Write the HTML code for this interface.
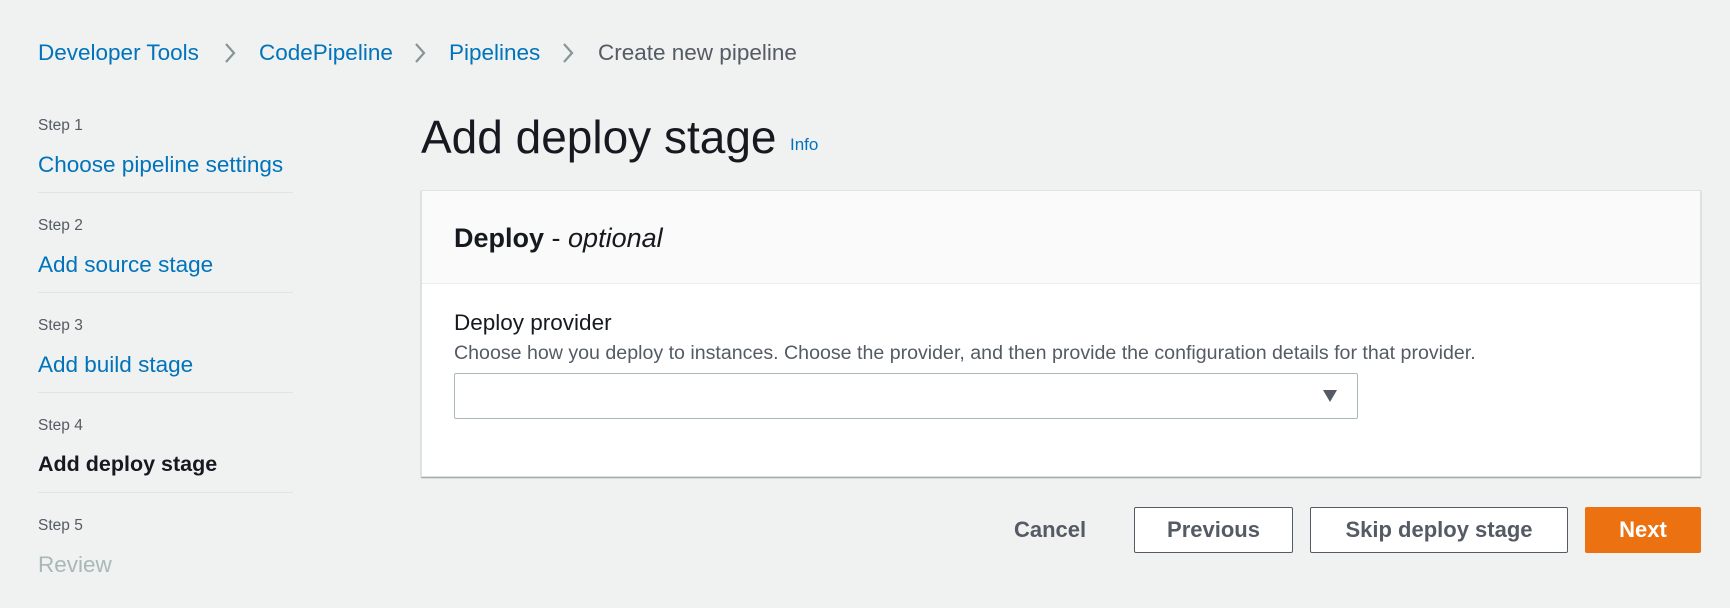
<!DOCTYPE html>
<html><head><meta charset="utf-8"><style>
*{margin:0;padding:0;box-sizing:border-box}
body{width:1730px;height:608px;background:#f0f1f1;font-family:"Liberation Sans",sans-serif;position:relative;overflow:hidden;color:#16191f}
.a{position:absolute;white-space:nowrap;line-height:1}
.bc{top:42px;font-size:22.5px;color:#0073bb}
.chev{top:41px;width:20px;height:24px}
.step{left:38px;font-size:15.5px;color:#545b64}
.lnk{left:38px;font-size:22.5px;color:#0073bb}
.div{left:38px;width:255px;height:1px;background:#e2e4e4}
.btn{top:507px;height:46px;border:1px solid #545b64;border-radius:2px;background:#fff;font-weight:bold;font-size:22px;color:#545b64;display:flex;align-items:center;justify-content:center}
</style></head><body>
<div class="a bc" style="left:38px">Developer Tools</div>
<svg class="a chev" style="left:220px" viewBox="0 0 20 24"><path d="M6 3l8 9-8 9" fill="none" stroke="#879596" stroke-width="2.2"/></svg>
<div class="a bc" style="left:259px">CodePipeline</div>
<svg class="a chev" style="left:410px" viewBox="0 0 20 24"><path d="M6 3l8 9-8 9" fill="none" stroke="#879596" stroke-width="2.2"/></svg>
<div class="a bc" style="left:449px">Pipelines</div>
<svg class="a chev" style="left:558px" viewBox="0 0 20 24"><path d="M6 3l8 9-8 9" fill="none" stroke="#879596" stroke-width="2.2"/></svg>
<div class="a bc" style="left:598px;color:#545b64">Create new pipeline</div>

<div class="a step" style="top:118px">Step 1</div>
<div class="a lnk" style="top:154px">Choose pipeline settings</div>
<div class="a div" style="top:192px"></div>
<div class="a step" style="top:218px">Step 2</div>
<div class="a lnk" style="top:254px">Add source stage</div>
<div class="a div" style="top:292px"></div>
<div class="a step" style="top:318px">Step 3</div>
<div class="a lnk" style="top:354px">Add build stage</div>
<div class="a div" style="top:392px"></div>
<div class="a step" style="top:418px">Step 4</div>
<div class="a lnk" style="top:454px;color:#16191f;font-weight:bold;font-size:21.5px">Add deploy stage</div>
<div class="a div" style="top:492px"></div>
<div class="a step" style="top:518px">Step 5</div>
<div class="a lnk" style="top:554px;color:#aab7b8">Review</div>

<div class="a" style="left:421px;top:114px;font-size:46px">Add deploy stage</div>
<div class="a" style="left:790px;top:136px;font-size:17px;color:#0073bb">Info</div>

<div class="a" style="left:421px;top:190px;width:1280px;height:287px;background:#fff;border:1px solid #e0e2e2;box-shadow:0 1px 1px rgba(0,28,36,.4)">
 <div style="height:93px;background:#fafafa;border-bottom:1px solid #eaeded;padding:34px 0 0 32px;font-size:27px;line-height:1"><b>Deploy</b> - <i>optional</i></div>
 <div class="a" style="left:32px;top:121px;font-size:22.5px">Deploy provider</div>
 <div class="a" style="left:32px;top:153px;font-size:19.6px;color:#545b64">Choose how you deploy to instances. Choose the provider, and then provide the configuration details for that provider.</div>
 <div class="a" style="left:32px;top:182px;width:904px;height:46px;border:1px solid #aab7b8;border-radius:2px;background:#fff"></div>
 <svg class="a" style="left:900px;top:198px" width="16" height="14" viewBox="0 0 16 14"><path d="M1 1h14L8 13z" fill="#545b64"/></svg>
</div>

<div class="a" style="left:1014px;top:519px;font-size:22px;font-weight:bold;color:#545b64">Cancel</div>
<div class="a btn" style="left:1134px;width:159px">Previous</div>
<div class="a btn" style="left:1310px;width:258px">Skip deploy stage</div>
<div class="a btn" style="left:1585px;width:116px;background:#ec7211;border-color:#ec7211;color:#fff">Next</div>
</body></html>
